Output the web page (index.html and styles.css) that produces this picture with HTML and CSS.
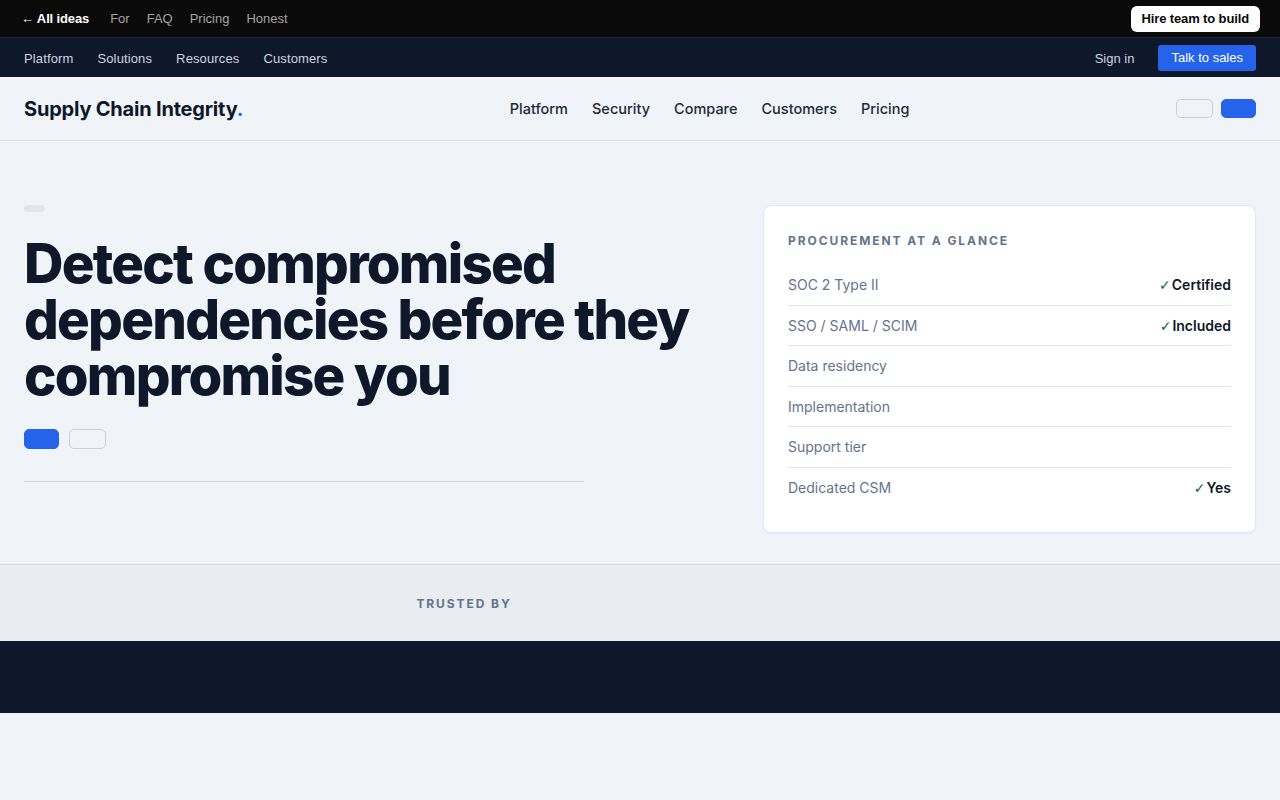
FILE: index.html
```html
<!DOCTYPE html>
<html lang="en">
<head>
    <meta charset="UTF-8">
    <meta name="viewport" content="width=device-width, initial-scale=1.0">
    <title>Supply Chain Integrity</title>
    <link rel="stylesheet" href="styles.css">
</head>
<body>
    <div class="ideas-bar">
        <div class="ideas-links">
            <a class="back-link" href="#">← All ideas</a>
            <a href="#">For</a>
            <a href="#">FAQ</a>
            <a href="#">Pricing</a>
            <a href="#">Honest</a>
        </div>
        <a class="hire-button" href="#">Hire team to build</a>
    </div>

    <div class="corp-bar">
        <div class="corp-links">
            <a href="#">Platform</a>
            <a href="#">Solutions</a>
            <a href="#">Resources</a>
            <a href="#">Customers</a>
        </div>
        <div class="corp-actions">
            <a class="sign-in" href="#">Sign in</a>
            <a class="sales-button" href="#">Talk to sales</a>
        </div>
    </div>

    <header class="site-header">
        <div class="logo">Supply Chain Integrity<span class="logo-dot">.</span></div>
        <nav class="main-nav">
            <a href="#">Platform</a>
            <a href="#">Security</a>
            <a href="#">Compare</a>
            <a href="#">Customers</a>
            <a href="#">Pricing</a>
        </nav>
        <div class="header-buttons">
            <button class="ghost-btn header-btn"></button>
            <button class="primary-btn header-btn"></button>
        </div>
    </header>

    <section class="hero">
        <div class="hero-copy">
            <div class="eyebrow-pill"></div>
            <h1>Detect compromised dependencies before they compromise you</h1>
            <div class="hero-buttons">
                <button class="primary-btn hero-btn"></button>
                <button class="ghost-btn hero-btn"></button>
            </div>
            <hr class="hero-rule">
        </div>

        <aside class="glance-card">
            <h2>Procurement at a glance</h2>
            <ul class="glance-list">
                <li><span>SOC 2 Type II</span><strong><i>✓</i>Certified</strong></li>
                <li><span>SSO / SAML / SCIM</span><strong><i>✓</i>Included</strong></li>
                <li><span>Data residency</span></li>
                <li><span>Implementation</span></li>
                <li><span>Support tier</span></li>
                <li><span>Dedicated CSM</span><strong><i>✓</i>Yes</strong></li>
            </ul>
        </aside>
    </section>

    <section class="trusted">
        <div class="trusted-label">Trusted by</div>
    </section>

    <footer class="site-footer"></footer>
</body>
</html>
```

FILE: styles.css
```css
body {
    margin: 0;
    background-color: #f0f4f8;
    font-family: 'Inter', 'Liberation Sans', sans-serif;
    color: #0f172a;
}

a {
    text-decoration: none;
    color: inherit;
}

button {
    cursor: pointer;
    padding: 0;
}

/* top strip */
.ideas-bar {
    height: 38px;
    background-color: #0a0a0a;
    display: flex;
    align-items: center;
    justify-content: space-between;
    padding: 0 20px 0 21px;
    font-family: 'Liberation Sans', Arial, sans-serif;
    font-size: 13px;
    border-bottom: 1px solid #1f2937;
    box-sizing: border-box;
}

.ideas-links {
    display: flex;
    gap: 17px;
    align-items: center;
}

.ideas-links a {
    color: #a3a3a3;
}

.ideas-links .back-link {
    color: #fff;
    font-weight: bold;
    margin-right: 4px;
    letter-spacing: -0.01em;
}

.hire-button {
    background-color: #fff;
    color: #0a0a0a;
    font-weight: bold;
    padding: 5px 11px 6px;
    border-radius: 6px;
    letter-spacing: -0.01em;
}

/* corporate nav */
.corp-bar {
    height: 38px;
    background-color: #0f172a;
    display: flex;
    align-items: center;
    justify-content: space-between;
    padding: 1px 24px 0;
    font-family: 'Liberation Sans', Arial, sans-serif;
    font-size: 13px;
}

.corp-links,
.corp-actions {
    display: flex;
    align-items: center;
    gap: 24px;
}

.corp-links a {
    letter-spacing: 0.01em;
}

.corp-bar a {
    color: #cbd5e1;
}

.corp-actions .sales-button {
    background-color: #2563eb;
    color: #fff;
    padding: 5px 13px 6px;
    border-radius: 3px;
}

/* main header */
.site-header {
    height: 63px;
    display: flex;
    align-items: center;
    justify-content: space-between;
    padding: 0 24px;
    border-bottom: 1px solid #dbe1e8;
}

.logo {
    font-size: 20px;
    font-weight: 700;
    letter-spacing: -0.01em;
}

.logo-dot {
    color: #2563eb;
}

.main-nav {
    display: flex;
    gap: 24px;
    font-size: 14.5px;
    font-weight: 500;
    color: #1e293b;
}

.header-buttons {
    display: flex;
    gap: 8px;
}

.primary-btn {
    background-color: #2563eb;
    border: 1px solid #2563eb;
    border-radius: 5px;
}

.ghost-btn {
    background-color: transparent;
    border: 1px solid #cbd0d6;
    border-radius: 5px;
}

.header-btn {
    width: 35px;
    height: 19px;
}

.header-btn.ghost-btn {
    width: 37px;
}

/* hero */
.hero {
    display: grid;
    grid-template-columns: 1fr 493px;
    gap: 24px;
    align-items: start;
    padding: 64px 24px 31px;
    border-bottom: 1px solid #d5dae1;
}

.eyebrow-pill {
    width: 21px;
    height: 7px;
    background-color: #e2e6ec;
    border-radius: 4px;
}

.hero h1 {
    font-size: 54.6px;
    font-weight: 800;
    line-height: 56px;
    letter-spacing: -0.032em;
    margin: 23px 0 26px;
    max-width: 700px;
}

.hero-buttons {
    display: flex;
    gap: 10px;
}

.hero-btn {
    width: 35px;
    height: 20px;
}

.hero-btn.ghost-btn {
    width: 37px;
}

.hero-rule {
    width: 560px;
    margin: 32px 0 0;
    border: none;
    border-top: 1px solid #d1d5db;
}

/* procurement card */
.glance-card {
    background-color: #fff;
    border: 1px solid #e2e8f0;
    border-radius: 8px;
    padding: 27px 24px 25px;
    box-shadow: 0 1px 2px rgba(15, 23, 42, 0.04);
}

.glance-card h2 {
    margin: 0 0 17px;
    font-size: 12px;
    font-weight: 700;
    letter-spacing: 0.16em;
    text-transform: uppercase;
    color: #64748b;
}

.glance-list {
    list-style: none;
    margin: 0;
    padding: 0;
}

.glance-list li {
    display: flex;
    justify-content: space-between;
    align-items: center;
    height: 39.5px;
    font-size: 14px;
    border-bottom: 1px solid #e2e8f0;
}

.glance-list li:last-child {
    border-bottom: none;
}

.glance-list span {
    color: #64748b;
}

.glance-list strong {
    font-weight: 600;
    color: #0f172a;
}

.glance-list i {
    font-style: normal;
    font-weight: 700;
    color: #166534;
    font-size: 14px;
    margin-right: 1px;
    font-family: 'DejaVu Sans', sans-serif;
}

/* logos strip */
.trusted {
    height: 76px;
    background-color: #e9edf2;
    display: flex;
    align-items: center;
    padding: 0 24px;
}

.trusted-label {
    width: 880px;
    text-align: center;
    font-size: 12px;
    font-weight: 700;
    letter-spacing: 0.16em;
    text-transform: uppercase;
    color: #64748b;
}

.site-footer {
    height: 72px;
    background-color: #0f172a;
}
```
